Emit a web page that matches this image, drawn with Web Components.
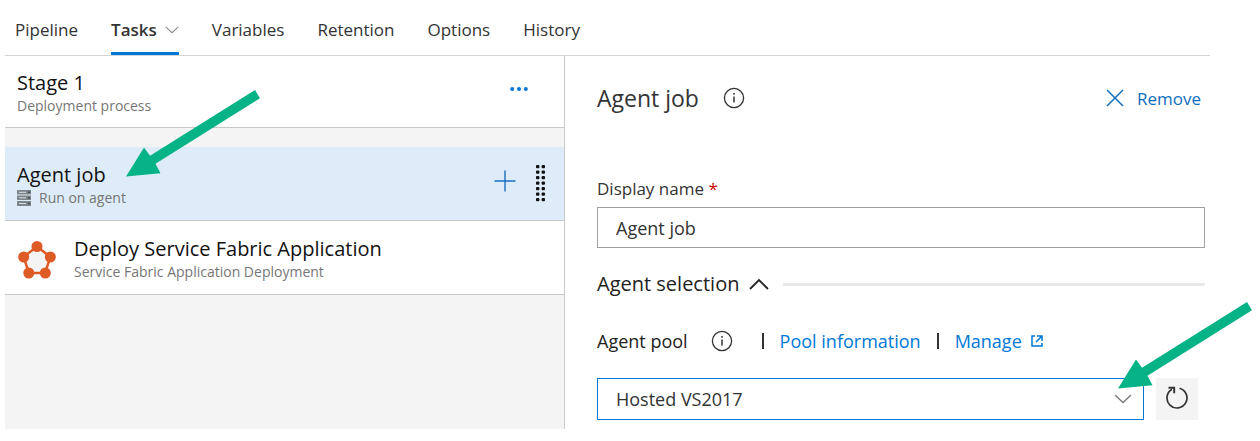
<!DOCTYPE html>
<html lang="en">
<head>
<meta charset="utf-8">
<title>Release pipeline tasks</title>
<style>
  body { margin: 0; background: #fff; color: #333; font-family: "Open Sans", "Noto Sans", sans-serif; font-size: 17px; }
</style>
</head>
<body>
<pipeline-editor></pipeline-editor>

<script>
const define = (name, html, setup) => customElements.define(name, class extends HTMLElement {
  connectedCallback() {
    if (this.shadowRoot) return;
    const root = this.attachShadow({ mode: 'open' });
    const template = document.createElement('template');
    template.innerHTML = html;
    root.append(template.content.cloneNode(true));
    if (setup) setup(this, root);
  }
});

const ICONS = {
  'chevron-down': [18, 10, '<path d="M1 1l8 7.500 8-7.500" fill="none" stroke="currentColor" stroke-width="1.300"/>'],
  'chevron-up': [20, 12, '<path d="M1 11l9-9 9 9" fill="none" stroke="currentColor" stroke-width="1.800"/>'],
  'more': [18, 4, '<g fill="currentColor"><circle cx="2.200" cy="2" r="2"/><circle cx="9" cy="2" r="2"/><circle cx="15.800" cy="2" r="2"/></g>'],
  'plus': [22, 22, '<path d="M11 .5v21M.5 11h21" fill="none" stroke="currentColor" stroke-width="1.400"/>'],
  'grip': [10, 38, '<g fill="currentColor">' + [0,1,2,3,4,5,6].map(i =>
      `<rect x="0" y="${i * 5.5}" width="3.400" height="3.200" rx="1"/><rect x="5.600" y="${i * 5.5}" width="3.400" height="3.200" rx="1"/>`).join('') + '</g>'],
  'server': [14, 16, '<path d="M0 0h14v4.500H0zM0 5.500h14V10H0zM0 11h14v5H0z" fill="#7d858b"/><path d="M2 2.300h7M2 7.800h7M2 13.500h7" stroke="#d4dbe0" stroke-width="1"/><path d="M11 2.300h2M11 7.800h2M11 13.500h2" stroke="#3f4549" stroke-width="1.500"/>'],
  'fabric': [38, 38, '<path d="M19 5.500L32.500 16 27 32H11L5.500 16z" fill="#f4f4f4" stroke="#df5b26" stroke-width="2.500"/><g fill="#df5b26"><circle cx="19" cy="5.500" r="5.500"/><circle cx="32.300" cy="16" r="5.500"/><circle cx="27.300" cy="32" r="5.500"/><circle cx="10.800" cy="32" r="5.500"/><circle cx="5.700" cy="16" r="5.500"/></g>'],
  'info': [22, 22, '<circle cx="11" cy="11" r="9.600" fill="none" stroke="#333" stroke-width="1.300"/><path d="M11 9.500v6M11 6v1.800" stroke="#333" stroke-width="1.500"/>'],
  'close': [18, 18, '<path d="M1 1l16 16M17 1L1 17" fill="none" stroke="currentColor" stroke-width="1.500"/>'],
  'external': [12, 12, '<path d="M4 1H1v10h10V8" fill="none" stroke="currentColor" stroke-width="1.500"/><path d="M6 1h5v5M11 1L5 7" fill="none" stroke="currentColor" stroke-width="1.500"/>'],
  'refresh': [24, 24, '<path d="M14.500 2.300A10 10 0 1 1 7 3.300" fill="none" stroke="#333" stroke-width="1.700"/><path d="M3.500 1.800h5.700v5.500" fill="none" stroke="#333" stroke-width="1.900"/>']
};

define('ui-icon', `<style>:host{display:block;flex:none} svg{display:block}</style>`, (host, root) => {
  const [w, h, body] = ICONS[host.getAttribute('name')];
  const width = host.getAttribute('width') || w;
  root.innerHTML += `<svg width="${width}" height="${Math.round(h * width / w)}" viewBox="0 0 ${w} ${h}" aria-hidden="true">${body}</svg>`;
});

define('callout-arrow', `<style>:host{display:block;width:134px;height:88px;pointer-events:none} svg{display:block}</style>
  <svg width="134" height="88" viewBox="0 0 134 88" aria-hidden="true"><path d="M0 86.500L18 57.500l6 8.300L129 0l5 8.300L29.500 73.700l5 9.600z" fill="#05b386"/></svg>`);

define('nav-tab', `<style>
  :host{display:block}
  a{display:flex;align-items:center;gap:8px;box-sizing:border-box;height:55px;padding-top:8px;border-bottom:3px solid transparent;color:#333;text-decoration:none;font-size:17px;line-height:24px}
  :host([selected]) a{font-weight:600;border-color:#0078d7}
  ui-icon{color:#888}
  </style><a href="#"><slot></slot></a>`, (host, root) => {
  if (host.hasAttribute('menu')) root.querySelector('a').insertAdjacentHTML('beforeend', '<ui-icon name="chevron-down" width="14"></ui-icon>');
  if (host.hasAttribute('selected')) root.querySelector('a').setAttribute('aria-current', 'page');
});

define('process-row', `<style>
  :host{display:flex;align-items:center;position:relative;padding:var(--row-top,15px) 18px var(--row-bottom,10px) 12px;border-bottom:1px solid #c8c8c8;background:#fff}
  :host([selected]){background:#deecf9}
  .text{flex:1;min-width:0}
  h2{margin:0;font-size:20px;font-weight:400;line-height:24px;color:#111}
  .sub{display:flex;align-items:center;gap:8px;font-size:14px;line-height:22px;color:#767676}
  ::slotted([slot=lead]){margin:0 18px 0 1px}
  ::slotted([slot=action]){margin-left:18px}
  ::slotted(callout-arrow){position:absolute;left:121px;bottom:42px;z-index:1}
  </style>
  <slot name="lead"></slot>
  <div class="text"><h2><slot></slot></h2><div class="sub"><slot name="sub-icon"></slot><slot name="sub"></slot></div></div>
  <slot name="action"></slot><slot name="callout"></slot>`);

define('icon-button', `<style>
  :host{display:block}
  button{display:flex;align-items:center;gap:13px;margin:0;padding:0;border:0;background:none;color:inherit;font:inherit}
  :host([boxed]) button{justify-content:center;box-sizing:border-box;width:42px;height:42px;padding-bottom:3px;background:#f4f4f4}
  </style><button type="button"><slot></slot></button>`, (host, root) => {
  if (host.hasAttribute('label')) root.querySelector('button').setAttribute('aria-label', host.getAttribute('label'));
});

define('process-list', `<style>
  :host{display:block;background:#f4f4f4;border-right:1px solid #c8c8c8}
  .jobs{margin-top:19px;--row-top:16px;--row-bottom:11px}
  icon-button{color:#0078d7;padding-bottom:10px}
  .more{margin-right:18px}
  .plus{color:#1b6ec2;margin-right:2px}
  .grip{color:#111;padding-bottom:4px}
  </style>
  <process-row>Stage 1<span slot="sub">Deployment process</span>
    <icon-button slot="action" class="more" label="More"><ui-icon name="more"></ui-icon></icon-button></process-row>
  <div class="jobs">
    <process-row selected>Agent job<ui-icon slot="sub-icon" name="server"></ui-icon><span slot="sub">Run on agent</span>
      <icon-button slot="action" class="plus" label="Add task"><ui-icon name="plus"></ui-icon></icon-button>
      <ui-icon slot="action" class="grip" name="grip"></ui-icon>
      <callout-arrow slot="callout"></callout-arrow></process-row>
    <process-row><ui-icon slot="lead" name="fabric"></ui-icon>Deploy Service Fabric Application<span slot="sub">Service Fabric Application Deployment</span></process-row>
  </div>`);

define('job-details', `<style>
  :host{display:block;padding:24px 5px 9px 32px}
  header,.section,.pool,.picker{display:flex;align-items:center}
  header{height:36px;gap:24px}
  h1{margin:0;font-size:23px;font-weight:400;line-height:32px}
  .remove{margin-left:auto;margin-right:4px;color:#106ebe;font-size:17px}
  .name{display:block;margin-top:61px;font-size:17px;line-height:24px}
  .name b{color:#c00;font-weight:400}
  input,select{display:block;box-sizing:border-box;width:100%;margin:0;padding:0 18px;border:1px solid #a0a0a0;border-radius:0;background:#fff;color:#333;font:inherit;font-size:18px;outline:0}
  input{height:41px;margin-top:6px}
  .section{margin-top:22px;height:28px;gap:14px;color:#222}
  .section button{display:flex;align-items:center;gap:10px;padding:0;border:0;background:none;color:inherit;font:inherit;font-size:20px;line-height:28px}
  .section hr{flex:1;margin:0;border:0;height:3px;background:#e9e9e9}
  .pool{margin-top:29px;height:28px;font-size:18px;color:#222;white-space:nowrap}
  .pool ui-icon{margin-left:23px}
  .pool a{display:flex;align-items:center;color:#0078d7;text-decoration:none}
  .pool a ui-icon{margin-left:9px}
  .bar{width:2px;height:16px;margin:0 16px;background:#333}
  .bar.first{margin-left:29px}
  .picker{margin-top:23px;gap:12px;padding-right:7px}
  .box{position:relative;flex:1;border:1px solid #0078d7}
  select{height:40px;border:0;appearance:none}
  .box ui-icon{position:absolute;right:11px;top:15px;color:#777;pointer-events:none}
  .box callout-arrow{position:absolute;right:-109px;bottom:29px}
  </style>
  <header><h1>Agent job</h1><ui-icon name="info"></ui-icon>
    <icon-button class="remove"><ui-icon name="close"></ui-icon>Remove</icon-button></header>
  <label class="name" for="name">Display name <b>*</b></label>
  <input id="name" type="text" value="Agent job">
  <div class="section"><button type="button" aria-expanded="true">Agent selection<ui-icon name="chevron-up"></ui-icon></button><hr></div>
  <div class="pool"><label for="pool">Agent pool</label><ui-icon name="info"></ui-icon>
    <span class="bar first"></span><a href="#">Pool information</a><span class="bar"></span>
    <a href="#">Manage<ui-icon name="external"></ui-icon></a></div>
  <div class="picker"><div class="box"><select id="pool"><option>Hosted VS2017</option></select>
    <ui-icon name="chevron-down"></ui-icon><callout-arrow></callout-arrow></div>
    <icon-button boxed label="Refresh"><ui-icon name="refresh"></ui-icon></icon-button></div>`);

define('pipeline-editor', `<style>
  :host{display:block;padding:0 50px 12px 5px}
  nav{display:flex;gap:33px;padding-left:10px;border-bottom:1px solid #d4d4d4}
  main{display:grid;grid-template-columns:minmax(0,112fr) minmax(0,129fr)}
  </style>
  <nav><nav-tab>Pipeline</nav-tab><nav-tab selected menu>Tasks</nav-tab><nav-tab>Variables</nav-tab><nav-tab>Retention</nav-tab><nav-tab>Options</nav-tab><nav-tab>History</nav-tab></nav>
  <main><process-list></process-list><job-details></job-details></main>`);
</script>
</body>
</html>
